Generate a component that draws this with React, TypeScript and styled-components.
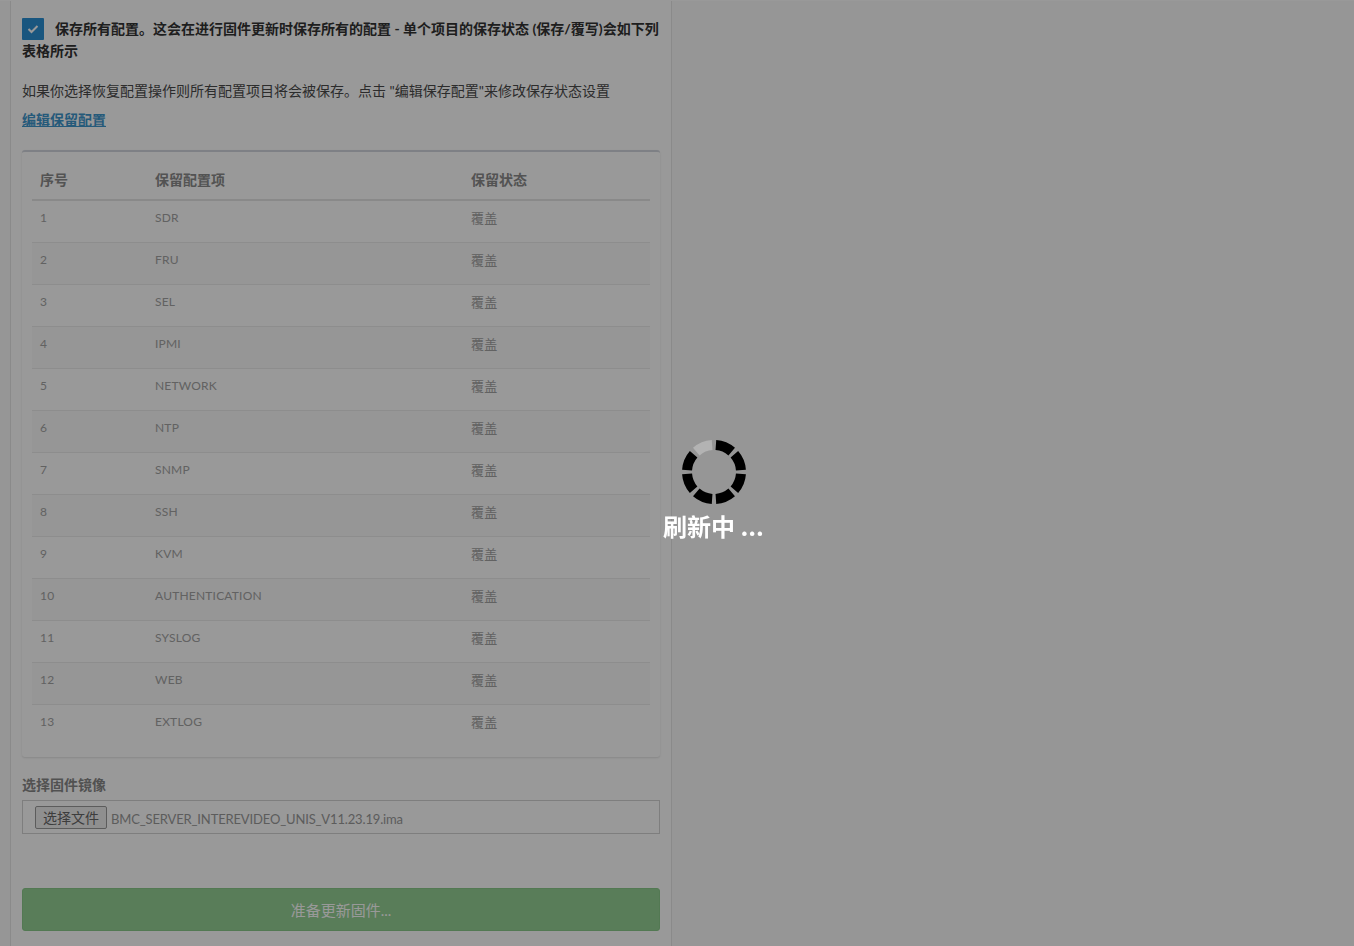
import React from "react";
import styled, { createGlobalStyle } from "styled-components";

const GlobalStyle = createGlobalStyle`
  html, body { margin: 0; padding: 0; }
  body {
    background: #fafafa;
    font-family: "Lato", "Noto Sans CJK SC", sans-serif;
    font-size: 14px;
    color: #333;
  }
  * { box-sizing: border-box; }
`;

const Page = styled.div`
  min-height: 946px;
  border-top: 1px solid #ffffff;
  display: flex;
`;

const Panel = styled.main`
  margin-left: 10px;
  width: 662px;
  min-height: 945px;
  background: #ffffff;
  border-left: 1px solid #e6e6e6;
  border-right: 1px solid #e6e6e6;
  padding: 17px 11px 0;
  display: flex;
  flex-direction: column;
`;

const CheckRow = styled.label`
  display: block;
  font-weight: 700;
  line-height: 22px;
  height: 44px;
  color: #333;
`;

const CheckBox = styled.span`
  display: inline-flex;
  vertical-align: top;
  align-items: center;
  justify-content: center;
  width: 22px;
  height: 22px;
  background: #2a8fd4;
  border-radius: 1px;
  margin-right: 11px;
`;

const Note = styled.p`
  margin: 19px 0 0;
  line-height: 20px;
  height: 20px;
  color: #4a4a4a;
`;

const EditLink = styled.a`
  display: block;
  margin-top: 9px;
  line-height: 20px;
  height: 20px;
  color: #3f96cc;
  font-weight: 700;
  text-decoration: underline;
  width: fit-content;
`;

const Box = styled.section`
  margin-top: 20px;
  border-top: 2px solid #d2d6de;
  border-radius: 3px;
  background: #ffffff;
  box-shadow: 0 1px 2px rgba(0, 0, 0, 0.12);
  padding: 9px 10px 11px;
`;

const Table = styled.table`
  width: 100%;
  border-collapse: collapse;
  table-layout: fixed;
`;

const Th = styled.th<{ $w?: number }>`
  width: ${(p) => (p.$w ? `${p.$w}px` : "auto")};
  text-align: left;
  font-weight: 600;
  color: #8a8a8a;
  font-size: 14px;
  padding: 9px 8px 9px;
  line-height: 20px;
  border-bottom: 2px solid #e4e4e4;
`;

const Tr = styled.tr<{ $striped: boolean }>`
  background: ${(p) => (p.$striped ? "#fafafa" : "transparent")};
`;

const Td = styled.td<{ $cjk?: boolean }>`
  padding: 8px 8px 15px;
  line-height: 18px;
  font-size: ${(p) => (p.$cjk ? "13px" : "12px")};
  color: #a3a3a3;
  border-top: 1px solid #ececec;
  letter-spacing: 0.2px;
`;

const FieldLabel = styled.div`
  margin-top: 18px;
  font-weight: 700;
  color: #888;
  line-height: 20px;
`;

const FileField = styled.div`
  margin-top: 5px;
  height: 34px;
  border: 1px solid #d2d2d2;
  display: flex;
  align-items: center;
  padding: 0 12px;
  gap: 4px;
`;

const FileButton = styled.span`
  display: inline-flex;
  align-items: center;
  height: 23px;
  padding: 0 7px;
  border: 1px solid #9a9a9a;
  border-radius: 2px;
  background: #efefef;
  color: #666;
  font-size: 14px;
`;

const FileName = styled.span`
  font-size: 13px;
  letter-spacing: -0.15px;
  color: #9a9a9a;
  padding-top: 4px;
`;

const SubmitButton = styled.button`
  margin-top: 54px;
  height: 43px;
  width: 100%;
  border: 1px solid #4cae4c;
  border-radius: 3px;
  background: #5cb85c;
  opacity: 0.65;
  color: #ffffff;
  font-family: inherit;
  font-size: 15px;
  cursor: not-allowed;
`;

const Overlay = styled.div`
  position: fixed;
  inset: 0;
  background: rgba(0, 0, 0, 0.4);
  display: flex;
  flex-direction: column;
  align-items: center;
  justify-content: center;
  padding: 36px 0 0 73px;
`;

const LoadingText = styled.div`
  margin-top: 6px;
  color: #ffffff;
  font-weight: 700;
  font-size: 24px;
  line-height: 32px;
  font-family: "Noto Sans CJK SC", sans-serif;
`;

const rows = [
  "SDR",
  "FRU",
  "SEL",
  "IPMI",
  "NETWORK",
  "NTP",
  "SNMP",
  "SSH",
  "KVM",
  "AUTHENTICATION",
  "SYSLOG",
  "WEB",
  "EXTLOG",
];

const Spinner: React.FC = () => {
  const c = 32;
  const r = 27;
  const segs = Array.from({ length: 8 }, (_, k) => {
    const a0 = ((k * 45 + 4) * Math.PI) / 180;
    const a1 = (((k + 1) * 45 - 4) * Math.PI) / 180;
    const x0 = c + r * Math.sin(a0);
    const y0 = c - r * Math.cos(a0);
    const x1 = c + r * Math.sin(a1);
    const y1 = c - r * Math.cos(a1);
    return {
      d: `M${x0.toFixed(2)} ${y0.toFixed(2)} A${r} ${r} 0 0 1 ${x1.toFixed(2)} ${y1.toFixed(2)}`,
      color: k === 7 ? "#b3b3b3" : "#000000",
    };
  });
  return (
    <svg width="64" height="64" viewBox="0 0 64 64">
      {segs.map((s, i) => (
        <path key={i} d={s.d} fill="none" stroke={s.color} strokeWidth={10} />
      ))}
    </svg>
  );
};

export default function App() {
  return (
    <>
      <GlobalStyle />
      <Page>
        <Panel>
          <CheckRow>
            <CheckBox>
              <svg width="12" height="10" viewBox="0 0 12 10">
                <path d="M1.5 5 L4.5 8 L10.5 2" fill="none" stroke="#ffffff" strokeWidth="2" />
              </svg>
            </CheckBox>
            保存所有配置。这会在进行固件更新时保存所有的配置 - 单个项目的保存状态 (保存/覆写)会如下列表格所示
          </CheckRow>
          <Note>如果你选择恢复配置操作则所有配置项目将会被保存。点击 "编辑保存配置"来修改保存状态设置</Note>
          <EditLink href="#">编辑保留配置</EditLink>
          <Box>
            <Table>
              <thead>
                <tr>
                  <Th $w={115}>序号</Th>
                  <Th $w={316}>保留配置项</Th>
                  <Th>保留状态</Th>
                </tr>
              </thead>
              <tbody>
                {rows.map((name, i) => (
                  <Tr key={name} $striped={i % 2 === 1}>
                    <Td>{i + 1}</Td>
                    <Td>{name}</Td>
                    <Td $cjk>覆盖</Td>
                  </Tr>
                ))}
              </tbody>
            </Table>
          </Box>
          <FieldLabel>选择固件镜像</FieldLabel>
          <FileField>
            <FileButton>选择文件</FileButton>
            <FileName>BMC_SERVER_INTEREVIDEO_UNIS_V11.23.19.ima</FileName>
          </FileField>
          <SubmitButton disabled>准备更新固件...</SubmitButton>
        </Panel>
      </Page>
      <Overlay>
        <Spinner />
        <LoadingText>刷新中 ...</LoadingText>
      </Overlay>
    </>
  );
}
